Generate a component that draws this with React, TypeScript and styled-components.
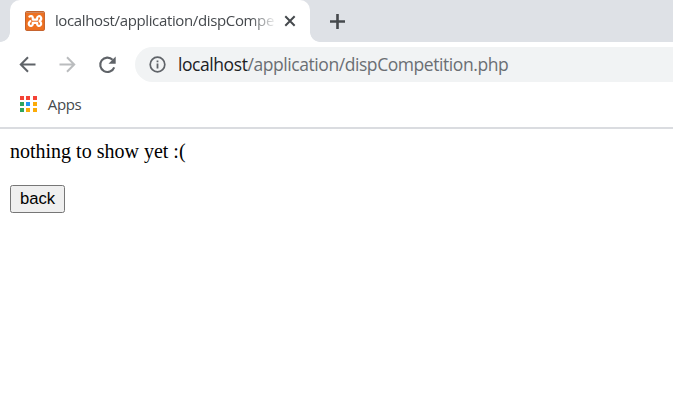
import React from "react";
import styled, { createGlobalStyle } from "styled-components";

const GlobalStyle = createGlobalStyle`
  * { box-sizing: border-box; }
  body { margin: 0; background: #fff; overflow: hidden; }
`;

const uiFont = `"Open Sans", "Noto Sans", sans-serif`;

const Window = styled.div`
  width: 100%;
  height: 412px;
  display: flex;
  flex-direction: column;
  background: #fff;
`;

const TabStrip = styled.div`
  height: 42px;
  display: flex;
  background: #dee1e6;
`;

const Flare = styled.div<{ $side: "left" | "right" }>`
  width: 10px;
  background: radial-gradient(
    circle at ${(p) => (p.$side === "left" ? "0 32px" : "10px 32px")},
    transparent 9.5px,
    #fff 10.2px
  );
  background-size: 10px 42px;
  clip-path: inset(32px 0 0 0);
`;

const Tab = styled.div`
  width: 300px;
  height: 42px;
  padding: 0 13px 0 15px;
  display: flex;
  align-items: center;
  background: #fff;
  border-radius: 10px 10px 0 0;
`;

const TabTitle = styled.div`
  width: 220px;
  margin: 0 9px 2px 10px;
  overflow: hidden;
  white-space: nowrap;
  font: 15px/24px ${uiFont};
  letter-spacing: -0.36px;
  color: #45494d;
  mask-image: linear-gradient(to right, #000 195px, transparent 222px);
`;

const NewTab = styled.div`
  display: flex;
  align-items: center;
  padding-left: 9px;
`;

const Toolbar = styled.div`
  height: 45px;
  padding: 5px 0 5px 17px;
  display: flex;
  align-items: center;
`;

const NavIcon = styled.div`
  width: 20px;
  height: 20px;
  margin-right: 20px;
  display: flex;
`;

const AddressBar = styled.div`
  flex: 1;
  height: 35px;
  margin-left: -2px;
  padding-left: 14px;
  display: flex;
  align-items: center;
  background: #f1f3f4;
  border-radius: 18px 0 0 18px;
`;

const Address = styled.div`
  margin: 0 0 1px 12px;
  font: 17.5px/26px ${uiFont};
  letter-spacing: -0.43px;
  color: #6a6e73;
  white-space: nowrap;
`;

const Host = styled.span`
  color: #202124;
`;

const Bookmarks = styled.div`
  height: 42px;
  padding: 0 0 7px 20px;
  display: flex;
  align-items: center;
  border-bottom: 2px solid #dadce0;
`;

const AppGrid = styled.div`
  display: grid;
  margin-top: 1px;
  grid-template-columns: repeat(3, 4px);
  grid-auto-rows: 4px;
  gap: 2.4px;
`;

const Dot = styled.i<{ $color: string }>`
  background: ${(p) => p.$color};
`;

const BookmarkLabel = styled.span`
  margin-left: 11px;
  font: 15px/24px ${uiFont};
  letter-spacing: -0.36px;
  color: #45494d;
`;

const Page = styled.main`
  flex: 1;
  padding: 11px 10px;
`;

const Message = styled.p`
  margin: 0;
  font: 20px/23px "Liberation Serif", serif;
  color: #000;
`;

const BackButton = styled.button`
  display: block;
  width: 55px;
  height: 28px;
  margin: 22px 0 0;
  padding: 0;
  border: 1px solid #767676;
  border-radius: 2.5px;
  background: #efefef;
  color: #000;
  font: 16.67px/24px "Liberation Sans", sans-serif;
`;

const dotColors = [
  "#f44336", "#f44336", "#f44336",
  "#2ea55f", "#2196f3", "#fbab08",
  "#2ea55f", "#fbab08", "#fbab08",
];

const XamppIcon = () => (
  <svg width="20" height="20" viewBox="0 0 20 20">
    <rect x="0.5" y="0.5" width="19" height="19" rx="1.2" fill="#ee7121" stroke="#c4602a" />
    <path d="M1 1.5h18" stroke="#cf8a62" />
    <path
      d="M4.4 5.6C5.6 4.6 7.6 5 7.8 6.6V8.6H12.2V6.8C12.4 5 14.6 4.6 15.7 5.8C16.8 7.2 16 9 14.6 10.1C16.2 11.2 16.8 13 15.6 14.3C14.4 15.4 12.4 15 12.2 13.3V11.8H7.8V13.3C7.6 15 5.4 15.4 4.3 14.3C3.2 13 3.8 11.2 5.4 10.1"
      fill="none"
      stroke="#fff"
      strokeWidth="2.2"
      strokeLinejoin="round"
      strokeLinecap="round"
    />
  </svg>
);

const BackIcon = () => (
  <svg width="20" height="20" viewBox="0 0 20 20" fill="none" stroke="#5f6368" strokeWidth="2">
    <path d="M18.5 9.5H4M11 2.3L3.8 9.5L11 16.7" />
  </svg>
);

const ForwardIcon = () => (
  <svg width="20" height="20" viewBox="0 0 20 20" fill="none" stroke="#babcbe" strokeWidth="2">
    <path d="M2.5 9.5H17M10 2.3L17.2 9.5L10 16.7" />
  </svg>
);

const ReloadIcon = () => (
  <svg width="20" height="20" viewBox="0 0 20 20" fill="none">
    <path d="M17.2 12.3A7.2 7.2 0 1 1 15.6 4.8" stroke="#5f6368" strokeWidth="2.1" />
    <path d="M18.7 1.6V8.8H11.5Z" fill="#5f6368" />
  </svg>
);

const InfoIcon = () => (
  <svg width="17" height="17" viewBox="0 0 17 17" fill="none" stroke="#5f6368">
    <circle cx="8.5" cy="8.5" r="7.3" strokeWidth="1.7" />
    <path d="M8.5 7.6V12.5M8.5 4.5V6.2" strokeWidth="1.8" />
  </svg>
);

const CloseIcon = () => (
  <svg width="14" height="14" viewBox="0 0 14 14" stroke="#45494d" strokeWidth="2">
    <path d="M2.3 2.3L11.7 11.7M11.7 2.3L2.3 11.7" />
  </svg>
);

const PlusIcon = () => (
  <svg width="17" height="17" viewBox="0 0 17 17" stroke="#45494d" strokeWidth="2.6">
    <path d="M8.5 1V16M1 8.5H16" />
  </svg>
);

export default function App() {
  return (
    <Window>
      <GlobalStyle />
      <TabStrip>
        <Flare $side="left" />
        <Tab>
          <XamppIcon />
          <TabTitle>localhost/application/dispCompetition.php</TabTitle>
          <CloseIcon />
        </Tab>
        <Flare $side="right" />
        <NewTab>
          <PlusIcon />
        </NewTab>
      </TabStrip>
      <Toolbar>
        <NavIcon><BackIcon /></NavIcon>
        <NavIcon><ForwardIcon /></NavIcon>
        <NavIcon><ReloadIcon /></NavIcon>
        <AddressBar>
          <InfoIcon />
          <Address>
            <Host>localhost</Host>/application/dispCompetition.php
          </Address>
        </AddressBar>
      </Toolbar>
      <Bookmarks>
        <AppGrid>
          {dotColors.map((color, i) => (
            <Dot key={i} $color={color} />
          ))}
        </AppGrid>
        <BookmarkLabel>Apps</BookmarkLabel>
      </Bookmarks>
      <Page>
        <Message>nothing to show yet :(</Message>
        <BackButton>back</BackButton>
      </Page>
    </Window>
  );
}
